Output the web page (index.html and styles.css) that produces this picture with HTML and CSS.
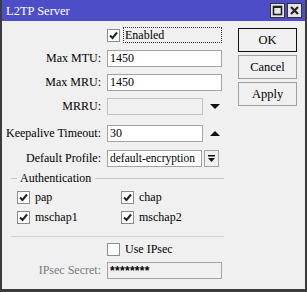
FILE: index.html
```html
<!DOCTYPE html>
<html>
<head>
<meta charset="utf-8">
<link rel="stylesheet" href="styles.css">
</head>
<body>
<div class="window">
  <div class="titlebar">
    <span class="title">L2TP Server</span>
    <div class="tb-btns">
      <span class="tb-btn"><svg width="13" height="13" viewBox="0 0 13 13"><rect x="2.5" y="2.5" width="8" height="8" fill="none" stroke="#222" stroke-width="1.6"/><line x1="2" y1="3" x2="11" y2="3" stroke="#222" stroke-width="2"/></svg></span>
      <span class="tb-btn"><svg width="13" height="13" viewBox="0 0 13 13"><path d="M3 3 L10 10 M10 3 L3 10" stroke="#222" stroke-width="2.2"/></svg></span>
    </div>
  </div>
  <div class="content">
    <div class="form">
      <div class="row r-enabled">
        <span class="label"></span>
        <span class="check">
          <span class="box"><svg width="13" height="13" viewBox="0 0 13 13"><path d="M3 6.5 L5.5 9 L10 3.5" fill="none" stroke="#222" stroke-width="2"/></svg></span>
          <span class="focus-text">Enabled</span>
        </span>
      </div>
      <div class="row r-mtu">
        <span class="label">Max MTU:</span>
        <span class="input wide">1450</span>
      </div>
      <div class="row r-mru">
        <span class="label">Max MRU:</span>
        <span class="input wide">1450</span>
      </div>
      <div class="row r-mrru">
        <span class="label">MRRU:</span>
        <span class="input narrow disabled"></span>
        <span class="arrow"><svg width="10" height="6" viewBox="0 0 10 6"><path d="M0 0 H10 L5 5 Z" fill="#111"/></svg></span>
      </div>
      <div class="row r-keep">
        <span class="label">Keepalive Timeout:</span>
        <span class="input narrow">30</span>
        <span class="arrow"><svg width="10" height="6" viewBox="0 0 10 6"><path d="M0 5 H10 L5 0 Z" fill="#111"/></svg></span>
      </div>
      <div class="row r-profile">
        <span class="label">Default Profile:</span>
        <span class="input profile">default-encryption</span>
        <span class="dd-btn"><svg width="9" height="9" viewBox="0 0 9 9"><rect x="1" y="1" width="7" height="1.5" fill="#111"/><path d="M1 4 H8 L4.5 8 Z" fill="#111"/></svg></span>
      </div>
      <div class="group">
        <span class="g-line short"></span>
        <span class="g-title">Authentication</span>
        <span class="g-line long"></span>
      </div>
      <div class="auth-grid">
        <span class="check small"><span class="box"><svg width="13" height="13" viewBox="0 0 13 13"><path d="M3 6.5 L5.5 9 L10 3.5" fill="none" stroke="#222" stroke-width="2"/></svg></span><span>pap</span></span>
        <span class="check small"><span class="box"><svg width="13" height="13" viewBox="0 0 13 13"><path d="M3 6.5 L5.5 9 L10 3.5" fill="none" stroke="#222" stroke-width="2"/></svg></span><span>chap</span></span>
        <span class="check small"><span class="box"><svg width="13" height="13" viewBox="0 0 13 13"><path d="M3 6.5 L5.5 9 L10 3.5" fill="none" stroke="#222" stroke-width="2"/></svg></span><span>mschap1</span></span>
        <span class="check small"><span class="box"><svg width="13" height="13" viewBox="0 0 13 13"><path d="M3 6.5 L5.5 9 L10 3.5" fill="none" stroke="#222" stroke-width="2"/></svg></span><span>mschap2</span></span>
      </div>
      <div class="separator"></div>
      <div class="row r-ipsec">
        <span class="label"></span>
        <span class="check"><span class="box"></span><span class="plain">Use IPsec</span></span>
      </div>
      <div class="row r-secret">
        <span class="label muted">IPsec Secret:</span>
        <span class="input wide secret">********</span>
      </div>
    </div>
    <div class="buttons">
      <span class="btn default">OK</span>
      <span class="btn">Cancel</span>
      <span class="btn">Apply</span>
    </div>
  </div>
</div>
</body>
</html>
```
FILE: styles.css
```css
html, body {
  margin: 0;
  padding: 0;
  background: #f0f0f0;
}
body {
  font-family: "Liberation Serif", "Times New Roman", serif;
  font-size: 12px;
  color: #000;
}
.window {
  width: 307px;
  height: 292px;
  box-sizing: border-box;
  border-left: 2px solid #3c3c3c;
  border-right: 2px solid #3c3c3c;
  border-bottom: 3px solid #3c3c3c;
  background: #f0f0f0;
  display: flex;
  flex-direction: column;
}
.titlebar {
  height: 21px;
  background: #4d4dc8;
  display: flex;
  align-items: center;
  justify-content: space-between;
  padding: 0 3px 0 4px;
}
.title {
  color: #fff;
  font-size: 12.5px;
  padding-top: 1px;
}
.tb-btns {
  display: flex;
  gap: 2px;
}
.tb-btn {
  width: 13px;
  height: 13px;
  border: 1px solid #333;
  background: #e6e6e6;
  display: flex;
}
.content {
  display: flex;
  padding: 7px 0 0 0;
}
.form {
  width: 229px;
  display: flex;
  flex-direction: column;
}
.row {
  display: flex;
  align-items: center;
  gap: 6px;
  height: 17px;
}
.label {
  width: 99px;
  text-align: right;
  white-space: nowrap;
}
.label.muted { color: #7a7a7a; }
.input {
  box-sizing: border-box;
  height: 17px;
  border: 1px solid #a3a3a3;
  background: #fff;
  padding: 0 2px;
  line-height: 15px;
  white-space: nowrap;
  overflow: hidden;
}
.input.wide { width: 115px; }
.input.narrow { width: 96px; }
.input.profile { width: 95px; font-size: 11.5px; }
.input.disabled { background: #f0f0f0; border-color: #c2c2c2; }
.input.secret { background: #f0f0f0; font-family: "Liberation Sans", Arial, sans-serif; font-size: 12px; font-weight: bold; letter-spacing: 0.3px; line-height: 17px; }
.arrow {
  display: flex;
  margin-left: 0;
  padding-left: 1px;
}
.dd-btn {
  box-sizing: border-box;
  width: 15px;
  height: 17px;
  border: 1px solid #a3a3a3;
  background: #f0f0f0;
  display: flex;
  align-items: center;
  justify-content: center;
  margin-left: -4px;
}
.check {
  display: flex;
  align-items: center;
  gap: 4px;
}
.box {
  box-sizing: border-box;
  width: 13px;
  height: 13px;
  border: 1px solid #8c8c8c;
  background: #fff;
  display: flex;
  align-items: center;
  justify-content: center;
}
.box svg { margin: -1px; }
.focus-text {
  outline: 1px dotted #333;
  width: 96px;
  height: 14px;
  line-height: 14px;
  padding-left: 1px;
}
.plain { padding-left: 1px; }
.r-enabled { height: 14px; margin-top: 0; }
.r-mtu { margin-top: 8px; }
.r-mru { margin-top: 7px; }
.r-mrru { margin-top: 7px; }
.r-keep { margin-top: 10px; }
.r-profile { margin-top: 8px; }
.group {
  display: flex;
  align-items: center;
  margin: 4px 0 0 9px;
  width: 213px;
  height: 14px;
}
.g-line {
  height: 1px;
  background: #c4c4c4;
}
.g-line.short { width: 6px; }
.g-line.long { flex: 1; }
.g-title { padding: 0 4px 0 3px; }
.auth-grid {
  display: grid;
  grid-template-columns: 104px 100px;
  row-gap: 7px;
  margin: 6px 0 0 15px;
}
.check.small { gap: 5px; height: 13px; }
.separator {
  height: 1px;
  background: #d0d0d0;
  margin: 12px 0 0 9px;
  width: 213px;
}
.r-ipsec { margin-top: 6px; height: 13px; }
.r-secret { margin-top: 6px; }
.buttons {
  display: flex;
  flex-direction: column;
  gap: 3px;
  margin-left: 7px;
}
.btn {
  box-sizing: border-box;
  width: 59px;
  height: 24px;
  border: 1px solid #a0a0a0;
  background: #f0f0f0;
  display: flex;
  align-items: center;
  justify-content: center;
  font-size: 12.5px;
}
.btn.default { border-color: #111; }
```
